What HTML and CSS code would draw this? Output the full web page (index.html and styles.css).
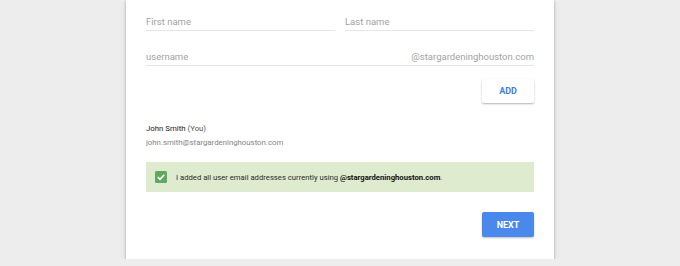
FILE: index.html
```html
<!DOCTYPE html>
<html>
<head>
<meta charset="utf-8">
<link rel="stylesheet" href="styles.css">
</head>
<body>
<div class="card">
  <div class="row two">
    <div class="field">First name</div>
    <div class="field">Last name</div>
  </div>
  <div class="row">
    <div class="field split"><span>username</span><span>@stargardeninghouston.com</span></div>
  </div>
  <div class="actions first">
    <button class="btn add">ADD</button>
  </div>
  <div class="user">
    <div class="name">John Smith <span class="you">(You)</span></div>
    <div class="email">john.smith@stargardeninghouston.com</div>
  </div>
  <div class="confirm">
    <span class="check"><svg width="12" height="12" viewBox="0 0 12 12"><rect width="12" height="12" rx="1.5" fill="#5fa85f"/><path d="M2.8 6.2 L5 8.3 L9.3 3.8" fill="none" stroke="#fff" stroke-width="1.6"/></svg></span>
    <span>I added all user email addresses currently using <b>@stargardeninghouston.com</b>.</span>
  </div>
  <div class="actions">
    <button class="btn next">NEXT</button>
  </div>
</div>
</body>
</html>
```

FILE: styles.css
```css
html, body {
  margin: 0;
  padding: 0;
  background: #ededed;
  font-family: Roboto, "Liberation Sans", sans-serif;
}
.card {
  width: 388px;
  margin: 0 auto;
  padding: 14px 20px 22px;
  background: #fff;
  box-shadow: 0 1px 2px rgba(0,0,0,0.28), 0 2px 6px rgba(0,0,0,0.12);
}
.row {
  display: flex;
  gap: 10px;
}
.row + .row {
  margin-top: 18px;
}
.field {
  flex: 1;
  font-size: 9.5px;
  line-height: 12px;
  color: #a2a2a2;
  padding: 2px 0 2px;
  border-bottom: 1px solid #e5e5e5;
}
.split {
  display: flex;
  justify-content: space-between;
}
.actions {
  display: flex;
  justify-content: flex-end;
  margin-top: 20px;
}
.actions.first {
  margin-top: 13px;
}
.btn {
  width: 52px;
  height: 24px;
  border: none;
  border-radius: 2px;
  font-family: Roboto, "Liberation Sans", sans-serif;
  font-size: 9px;
  font-weight: bold;
  padding: 0;
}
.add {
  background: #fff;
  color: #3d7ee8;
  box-shadow: 0 1px 2px rgba(0,0,0,0.3);
}
.next {
  height: 25px;
  background: #4b88ec;
  color: #fff;
  box-shadow: 0 1px 2px rgba(0,0,0,0.25);
}
.user {
  margin-top: 19px;
  font-size: 7.8px;
  line-height: 13.5px;
}
.name {
  color: #1a1a1a;
}
.you {
  color: #555;
}
.email {
  color: #858585;
}
.confirm {
  margin-top: 13px;
  height: 30px;
  background: #deebcf;
  display: flex;
  align-items: center;
  gap: 9px;
  padding-left: 9px;
  font-size: 7.7px;
  color: #2a2a2a;
}
.confirm b {
  color: #111;
}
.check {
  display: flex;
}
```
